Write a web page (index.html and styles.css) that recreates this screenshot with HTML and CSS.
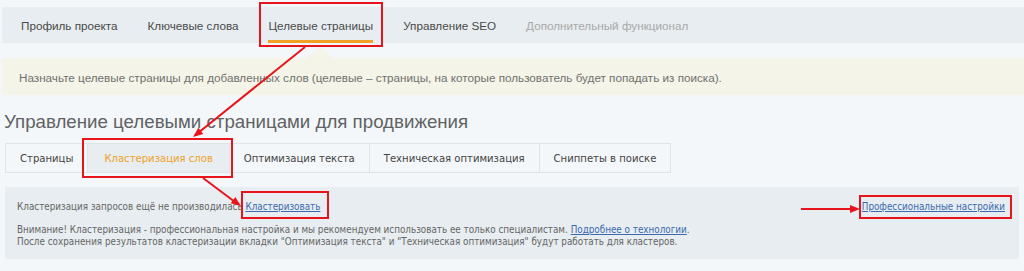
FILE: index.html
```html
<!DOCTYPE html>
<html lang="ru">
<head>
<meta charset="utf-8">
<title>Целевые страницы</title>
<link rel="stylesheet" href="styles.css">
</head>
<body>
<div class="page">
  <nav class="topnav">
    <a class="topnav-item">Профиль проекта</a>
    <a class="topnav-item">Ключевые слова</a>
    <a class="topnav-item active">Целевые страницы</a>
    <a class="topnav-item">Управление SEO</a>
    <a class="topnav-item disabled">Дополнительный функционал</a>
  </nav>
  <div class="notice">Назначьте целевые страницы для добавленных слов (целевые – страницы, на которые пользователь будет попадать из поиска).</div>
  <h1 class="title">Управление целевыми страницами для продвижения</h1>
  <div class="subtabs">
    <a class="subtab">Страницы</a>
    <a class="subtab active">Кластеризация слов</a>
    <a class="subtab">Оптимизация текста</a>
    <a class="subtab">Техническая оптимизация</a>
    <a class="subtab">Сниппеты в поиске</a>
  </div>
  <div class="panel">
    <div class="panel-row">
      <span>Кластеризация запросов ещё не производилась <a class="link">Кластеризовать</a></span>
      <a class="link">Профессиональные настройки</a>
    </div>
    <p class="panel-note">Внимание! Кластеризация - профессиональная настройка и мы рекомендуем использовать ее только специалистам. <a class="link">Подробнее о технологии</a>.<br>После сохранения результатов кластеризации вкладки "Оптимизация текста" и "Техническая оптимизация" будут работать для кластеров.</p>
  </div>
</div>
<svg class="annotations" width="1024" height="271" viewBox="0 0 1024 271">
  <g fill="none" stroke="#e8141c" stroke-width="2">
    <rect x="260" y="3" width="122" height="43"/>
    <rect x="83" y="139" width="149" height="38"/>
    <rect x="242" y="192" width="86" height="26"/>
    <rect x="860" y="196" width="151" height="22"/>
    <line x1="305" y1="47" x2="198" y2="133"/>
    <line x1="203" y1="178" x2="235" y2="202"/>
    <line x1="801" y1="209" x2="852" y2="209"/>
  </g>
  <g fill="#e8141c">
    <polygon points="193,137 203.3,133.9 198.3,127.7"/>
    <polygon points="241,206 230.6,203.3 235.3,196.9"/>
    <polygon points="860,209 850,205 850,213"/>
  </g>
</svg>
</body>
</html>
```
FILE: styles.css
```css
html, body {
  margin: 0;
  padding: 0;
}
body {
  background: #f4f7f9;
  width: 1024px;
  height: 271px;
  overflow: hidden;
  position: relative;
  font-family: "Liberation Sans", Arial, sans-serif;
}
.page {
  padding-left: 2px;
}
.topnav {
  margin-top: 7px;
  height: 36px;
  background: #e7edf0;
  display: flex;
  gap: 30px;
  padding-left: 19px;
}
.topnav-item {
  height: 36px;
  box-sizing: border-box;
  display: flex;
  align-items: center;
  padding-top: 4px;
  border-bottom: 3px solid transparent;
  font-size: 11.7px;
  color: #4a4a4a;
}
.topnav-item.active {
  border-bottom-color: #f2a127;
}
.topnav-item.disabled {
  color: #a9a9a9;
}
.notice {
  position: relative;
  margin-top: 15px;
  height: 37px;
  box-sizing: border-box;
  padding: 13px 0 0 17px;
  background: #f5f4e8;
  font-size: 11.7px;
  color: #707070;
}
.notice::before {
  content: "";
  position: absolute;
  left: 305px;
  top: -11px;
  border-left: 13px solid transparent;
  border-right: 13px solid transparent;
  border-bottom: 11px solid #f5f4e8;
}
.title {
  margin: 15px 0 0 2px;
  font-size: 18.7px;
  line-height: 24px;
  font-weight: normal;
  color: #5f6264;
}
.subtabs {
  display: flex;
  margin: 9px 0 0 3px;
  height: 30px;
}
.subtab {
  display: flex;
  align-items: center;
  padding: 0 14px;
  border: 1px solid #dfe4e7;
  margin-left: -1px;
  font-family: "DejaVu Sans Condensed", "DejaVu Sans", sans-serif;
  font-size: 11.2px;
  color: #444;
  background: #f4f7f9;
}
.subtab:first-child {
  margin-left: 0;
}
.subtab.active {
  background: #e7edf0;
  color: #f2a127;
  padding: 0 16px;
}
.panel {
  margin: 14px 5px 0 3px;
  height: 72px;
  box-sizing: border-box;
  background: #e7edf0;
  padding: 13px 14px 0 12px;
  font-family: "DejaVu Sans Condensed", "DejaVu Sans", sans-serif;
  font-size: 9.8px;
  color: #666;
}
.panel-row {
  display: flex;
  justify-content: space-between;
  align-items: center;
  line-height: 13px;
}
.link {
  color: #3b69b0;
  text-decoration: underline;
}
.panel-note {
  margin: 11px 0 0;
  line-height: 11.5px;
}
.annotations {
  position: absolute;
  left: 0;
  top: 0;
  pointer-events: none;
}
```
